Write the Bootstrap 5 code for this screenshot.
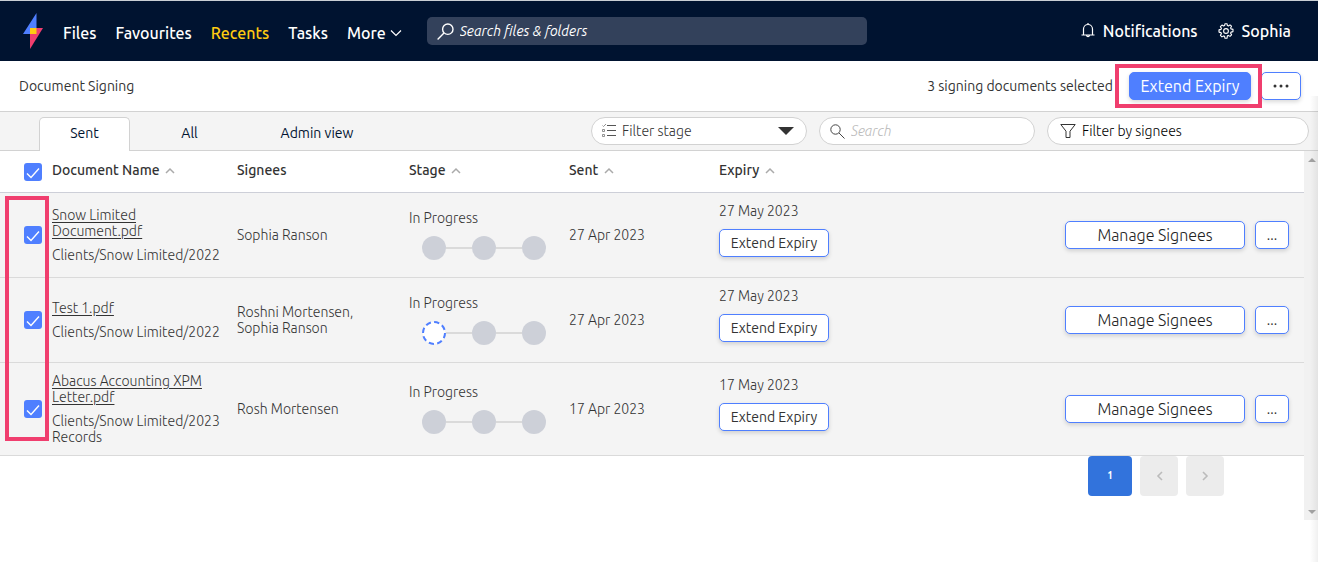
<!DOCTYPE html>
<html lang="en">
<head>
<meta charset="utf-8">
<meta name="viewport" content="width=device-width, initial-scale=1">
<title>Document Signing</title>
<link href="https://cdn.jsdelivr.net/npm/bootstrap@5.3.0/dist/css/bootstrap.min.css" rel="stylesheet">
<script src="https://cdn.jsdelivr.net/npm/bootstrap@5.3.0/dist/js/bootstrap.bundle.min.js" defer></script>
<style>
:root { --accent: #4f7fff; --navy: #001330; --edge: #d2d2d2; --pale: #f4f4f4; --ink: #333; --pink: #f03e6e; }
body { font-family: Ubuntu, "Open Sans", "Noto Sans", sans-serif; font-size: 14px; line-height: 16px; color: var(--ink); min-height: 100vh; }
.topbar { background: var(--navy); border-top: 1px solid #c9cfd4; height: 61px; padding: 0 27px 0 23px; }
.topbar a { color: #fff; font-size: 16px; line-height: 20px; font-weight: 500; text-decoration: none; }
.topbar a.current { color: #fc1; }
.main-links { gap: 19px; margin-left: 20px; padding-top: 4px; }
.user-links { gap: 20px; }
.global-search { width: 440px; height: 28px; margin-left: 25px; padding: 0 10px; gap: 6px; background: #33415b; border-radius: 5px; }
.bare { border: 0; outline: 0; background: none; padding: 0; min-width: 0; color: inherit; appearance: none; }
.global-search .bare { color: #fff; font-style: italic; }
.global-search .bare::placeholder { color: #fff; opacity: 1; }
.subbar { height: 51px; padding: 0 17px 0 19px; border-bottom: 1px solid var(--edge); }
.tabbar { background: var(--pale); height: 39px; border-bottom: 1px solid var(--edge); padding: 5px 9px 0 39px; }
.tabs .nav-link { width: 91px; height: 33px; padding: 7px 0; text-align: center; color: var(--navy); font-size: 14px; border: 1px solid transparent; border-bottom: 0; border-radius: 5px 5px 0 0; }
.tabs .nav-link.active { height: 34px; background: #fff; border-color: var(--edge); }
.tabs .wide { width: 120px; margin-left: 22px; }
.tabs .mid { margin-left: 14px; }
.pill { height: 28px; background: #fff; border: 1px solid var(--edge); border-radius: 14px; padding: 0 10px; gap: 6px; }
.pill .bare { font-weight: 300; }
.pill-a { width: 216px; padding-right: 12px; }
.pill-b { width: 262px; padding-left: 12px; }
.pill .soft::placeholder { color: #bbb; font-style: italic; opacity: 1; }
.pill .dark::placeholder { color: #000; opacity: 1; }
.act { background: #fff; border: 1px solid var(--accent); border-radius: 5px; height: 28px; padding: 0; color: var(--ink); line-height: 20px; font-size: 14px; box-shadow: 0 2px 4px rgba(0,0,0,.15); }
.act.solid { background: var(--accent); color: #fff; width: 122px; font-size: 16px; }
.act.main-act { width: 180px; font-size: 16px; font-weight: 300; color: #222; }
.act.row-dots { width: 34px; }
.act.top-dots { width: 40px; margin-left: 10px; }
.act.extend { width: 110px; margin-top: 10px; }
.marker { position: absolute; border: 4px solid var(--pink); pointer-events: none; z-index: 2; }
.marker.on-button { inset: -8px -11px -8px -14px; }
.marker.on-ticks { left: 5px; width: 44px; top: 45px; bottom: 15px; }
.docs { table-layout: fixed; width: 100%; margin: 0; }
.docs th { font-weight: 500; padding: 0 0 3px; height: 41px; vertical-align: middle; border-bottom: 1px solid #cdcfd8; }
.docs th svg { margin: 0 0 2px 2px; }
.docs td { background: var(--pale); vertical-align: middle; padding: 0; height: 85px; border-bottom: 1px solid #dadada; font-weight: 300; }
.docs tr.tall td { height: 93px; }
.docs td.expiry { padding-bottom: 10px; }
.docs td.actions { padding-right: 15px; }
.actions-row { gap: 10px; }
.docs .name a { color: var(--ink); text-decoration: underline; text-underline-offset: 2px; }
.docs .path { margin-top: 8px; }
.docs th.tick { padding: 1px 0 0 24px; }
.docs td.tick { padding-left: 24px; }
.tick .form-check-input { display: block; width: 18px; height: 18px; margin: 0; border-radius: 3px; border: 0; }
.tick .form-check-input:checked { background-color: var(--accent); background-size: 18px 18px; background-image: url("data:image/svg+xml,%3csvg xmlns='http://www.w3.org/2000/svg' viewBox='0 0 18 18'%3e%3cpath fill='none' stroke='%23fff' stroke-width='1.400' d='M3 10.500l4 4 8-9'/%3e%3c/svg%3e"); }
.step-dot { width: 24px; height: 24px; border-radius: 50%; background: #cdd0d8; }
.step-line { width: 26px; height: 2px; background: #dadada; }
.steps { margin: 10px 0 0 13px; }
.pager button { border: 0; border-radius: 4px; height: 40px; width: 38px; background: #ececec; color: #bbb; }
.pager .here { width: 44px; background: #3273dc; color: #fff; font-size: 10px; font-weight: 700; }
.pager { gap: 8px; padding-right: 80px; }
.rail { width: 14px; flex: none; background: #f1f1f1; padding: 6px 0 5px 2px; }
.pane { min-height: 369px; }
.edge-shade { position: absolute; right: 0; top: 96px; bottom: 0; width: 8px; background: linear-gradient(to right, rgba(0,0,0,0), rgba(0,0,0,.06)); pointer-events: none; }
svg { flex: none; display: block; }
</style>
</head>
<body class="position-relative">
<header class="topbar d-flex align-items-center">
  <a href="#" aria-label="Home"><svg width="20" height="36" viewBox="0 0 20 36"><path d="M13.500 0v15H7v6H0z" fill="#4f7fff"/><path d="M7 36V15h13z" fill="#f03e6e"/><path d="M7 15h6.500v6H7z" fill="#fc1"/></svg></a>
  <nav class="main-links d-flex">
    <a href="#">Files</a><a href="#">Favourites</a><a href="#" class="current">Recents</a><a href="#">Tasks</a>
    <a href="#" class="d-flex align-items-center gap-1">More <svg width="12" height="8" viewBox="0 0 12 8"><path d="M1 1.500l5 5 5-5" fill="none" stroke="#fff" stroke-width="1.200"/></svg></a>
  </nav>
  <div class="global-search d-flex align-items-center">
    <svg width="17" height="17" viewBox="0 0 17 17" fill="none" stroke="#fff" stroke-width="1.400"><circle cx="10.800" cy="6.200" r="5.200"/><path d="M7 10L.6 16.400"/></svg>
    <input class="bare flex-grow-1" type="text" placeholder="Search files &amp; folders" aria-label="Search files and folders">
  </div>
  <div class="d-flex ms-auto user-links">
    <a href="#" class="d-flex align-items-center gap-2"><svg width="14" height="16" viewBox="0 0 14 16" fill="none" stroke="#fff" stroke-width="1.200"><path d="M.5 12h13M2.500 12V6a4.500 4.500 0 0 1 9 0v6M5.500 12.500a1.600 1.600 0 0 0 3 0M7 0v1.500"/></svg>Notifications</a>
    <a href="#" class="d-flex align-items-center gap-2"><svg width="16" height="16" viewBox="0 0 16 16" fill="none" stroke="#fff" stroke-width="1.100"><circle cx="8" cy="8" r="2.400"/><path stroke-linejoin="round" d="M6.600 2.600L7 .7h2l.4 1.900 1 .4L12 1.900 13.500 3.200l-.9 1.700.5 1 1.900.5v2.200l-1.900.5-.5 1 1 1.700-1.600 1.600-1.600-1-1 .4L9 15.300H7l-.4-2-1-.4-1.600 1-1.600-1.600 1-1.700-.5-1L1 9.100V6.900l1.900-.5.5-1-1-1.700L4 2.100 5.600 3z"/></svg>Sophia</a>
  </div>
</header>

<div class="subbar d-flex align-items-center">
  <span>Document Signing</span>
  <span class="ms-auto me-3">3 signing documents selected</span>
  <div class="position-relative">
    <button type="button" class="btn act solid d-block">Extend Expiry</button>
    <span class="marker on-button"></span>
  </div>
  <button type="button" class="btn act top-dots d-flex align-items-center justify-content-center" aria-label="More actions"><svg width="16" height="4" viewBox="0 0 16 4" fill="#333"><circle cx="2" cy="2" r="1.500"/><circle cx="8" cy="2" r="1.500"/><circle cx="14" cy="2" r="1.500"/></svg></button>
</div>

<div class="tabbar d-flex justify-content-between">
  <nav class="tabs nav flex-nowrap">
    <a href="#" class="nav-link active">Sent</a><a href="#" class="nav-link mid">All</a><a href="#" class="nav-link wide">Admin view</a>
  </nav>
  <div class="d-flex gap-2">
    <div class="pill pill-a d-flex align-items-center me-1">
      <svg width="14" height="14" viewBox="0 0 14 14" fill="none" stroke="#777"><path d="M5 1.500h9M5 6.500h9M5 11.500h9" stroke="#555"/><path d="M.5 1.500l1 1 2.500-2.500M.5 5.500h2v2h-2zM.5 10.500h2v2h-2z" stroke-width=".8"/></svg>
      <select class="bare flex-grow-1" aria-label="Filter stage"><option>Filter stage</option></select>
      <svg width="16" height="8" viewBox="0 0 16 8"><path d="M0 0h16L8 8z" fill="#333"/></svg>
    </div>
    <div class="pill pill-a d-flex align-items-center me-1">
      <svg width="15" height="15" viewBox="0 0 15 15" fill="none" stroke="#444"><circle cx="5.500" cy="5.500" r="4.700"/><path d="M9 9l5.500 5.500"/></svg>
      <input class="bare soft flex-grow-1" type="text" placeholder="Search" aria-label="Search documents">
    </div>
    <div class="pill pill-b d-flex align-items-center">
      <svg width="16" height="14" viewBox="0 0 16 14" fill="none" stroke="#333"><path d="M.8.500h14.400L10 7.200v6.300H6V7.200z"/></svg>
      <input class="bare dark flex-grow-1" type="text" placeholder="Filter by signees" aria-label="Filter by signees">
    </div>
  </div>
</div>

<div class="pane d-flex">
  <main class="flex-grow-1">
    <div class="position-relative">
      <table class="docs">
        <colgroup><col style="width:52px"><col style="width:185px"><col style="width:172px"><col style="width:160px"><col style="width:150px"><col style="width:150px"><col></colgroup>
        <thead>
          <tr>
            <th class="tick"><input class="form-check-input" type="checkbox" checked aria-label="Select all"></th>
            <th>Document Name <svg class="d-inline" width="10" height="7" viewBox="0 0 10 7"><path d="M1 6l4-4 4 4" fill="none" stroke="#aaa" stroke-width="1.500"/></svg></th>
            <th>Signees</th>
            <th>Stage <svg class="d-inline" width="10" height="7" viewBox="0 0 10 7"><path d="M1 6l4-4 4 4" fill="none" stroke="#aaa" stroke-width="1.500"/></svg></th>
            <th>Sent <svg class="d-inline" width="10" height="7" viewBox="0 0 10 7"><path d="M1 6l4-4 4 4" fill="none" stroke="#aaa" stroke-width="1.500"/></svg></th>
            <th>Expiry <svg class="d-inline" width="10" height="7" viewBox="0 0 10 7"><path d="M1 6l4-4 4 4" fill="none" stroke="#aaa" stroke-width="1.500"/></svg></th>
            <th></th>
          </tr>
        </thead>
        <tbody>
          <tr>
            <td class="tick"><input class="form-check-input" type="checkbox" checked aria-label="Select Snow Limited Document.pdf"></td>
            <td class="name"><a href="#">Snow Limited<br>Document.pdf</a><div class="path">Clients/Snow Limited/2022</div></td>
            <td>Sophia Ranson</td>
            <td class="stage">In Progress<div class="steps d-flex align-items-center"><span class="step-dot"></span><span class="step-line"></span><span class="step-dot"></span><span class="step-line"></span><span class="step-dot"></span></div></td>
            <td>27 Apr 2023</td>
            <td class="expiry">27 May 2023<button type="button" class="btn act extend d-block">Extend Expiry</button></td>
            <td class="actions"><div class="actions-row d-flex justify-content-end"><button type="button" class="btn act main-act">Manage Signees</button><button type="button" class="btn act row-dots">...</button></div></td>
          </tr>
          <tr>
            <td class="tick"><input class="form-check-input" type="checkbox" checked aria-label="Select Test 1.pdf"></td>
            <td class="name"><a href="#">Test 1.pdf</a><div class="path">Clients/Snow Limited/2022</div></td>
            <td>Roshni Mortensen,<br>Sophia Ranson</td>
            <td class="stage">In Progress<div class="steps d-flex align-items-center"><svg width="24" height="24" viewBox="0 0 24 24"><circle cx="12" cy="12" r="11" fill="#fff" stroke="#4f7fff" stroke-width="2" stroke-dasharray="5.300 3.300"/></svg><span class="step-line"></span><span class="step-dot"></span><span class="step-line"></span><span class="step-dot"></span></div></td>
            <td>27 Apr 2023</td>
            <td class="expiry">27 May 2023<button type="button" class="btn act extend d-block">Extend Expiry</button></td>
            <td class="actions"><div class="actions-row d-flex justify-content-end"><button type="button" class="btn act main-act">Manage Signees</button><button type="button" class="btn act row-dots">...</button></div></td>
          </tr>
          <tr class="tall">
            <td class="tick"><input class="form-check-input" type="checkbox" checked aria-label="Select Abacus Accounting XPM Letter.pdf"></td>
            <td class="name"><a href="#">Abacus Accounting XPM<br>Letter.pdf</a><div class="path">Clients/Snow Limited/2023<br>Records</div></td>
            <td>Rosh Mortensen</td>
            <td class="stage">In Progress<div class="steps d-flex align-items-center"><span class="step-dot"></span><span class="step-line"></span><span class="step-dot"></span><span class="step-line"></span><span class="step-dot"></span></div></td>
            <td>17 Apr 2023</td>
            <td class="expiry">17 May 2023<button type="button" class="btn act extend d-block">Extend Expiry</button></td>
            <td class="actions"><div class="actions-row d-flex justify-content-end"><button type="button" class="btn act main-act">Manage Signees</button><button type="button" class="btn act row-dots">...</button></div></td>
          </tr>
        </tbody>
      </table>
      <span class="marker on-ticks"></span>
    </div>
    <div class="pager d-flex justify-content-end">
      <button type="button" class="here">1</button>
      <button type="button" class="d-flex align-items-center justify-content-center" aria-label="Previous page"><svg width="7" height="10" viewBox="0 0 7 10"><path d="M6 1L2 5l4 4" fill="none" stroke="#bbb" stroke-width="1.600"/></svg></button>
      <button type="button" class="d-flex align-items-center justify-content-center" aria-label="Next page"><svg width="7" height="10" viewBox="0 0 7 10"><path d="M1 1l4 4-4 4" fill="none" stroke="#bbb" stroke-width="1.600"/></svg></button>
    </div>
  </main>
  <div class="rail d-flex flex-column justify-content-between align-items-center">
    <svg width="8" height="5" viewBox="0 0 8 5"><path d="M0 5l4-4 4 4z" fill="#a3a3a3"/></svg>
    <svg width="8" height="5" viewBox="0 0 8 5"><path d="M0 0l4 4 4-4z" fill="#a3a3a3"/></svg>
  </div>
</div>
<div class="edge-shade"></div>
</body>
</html>
